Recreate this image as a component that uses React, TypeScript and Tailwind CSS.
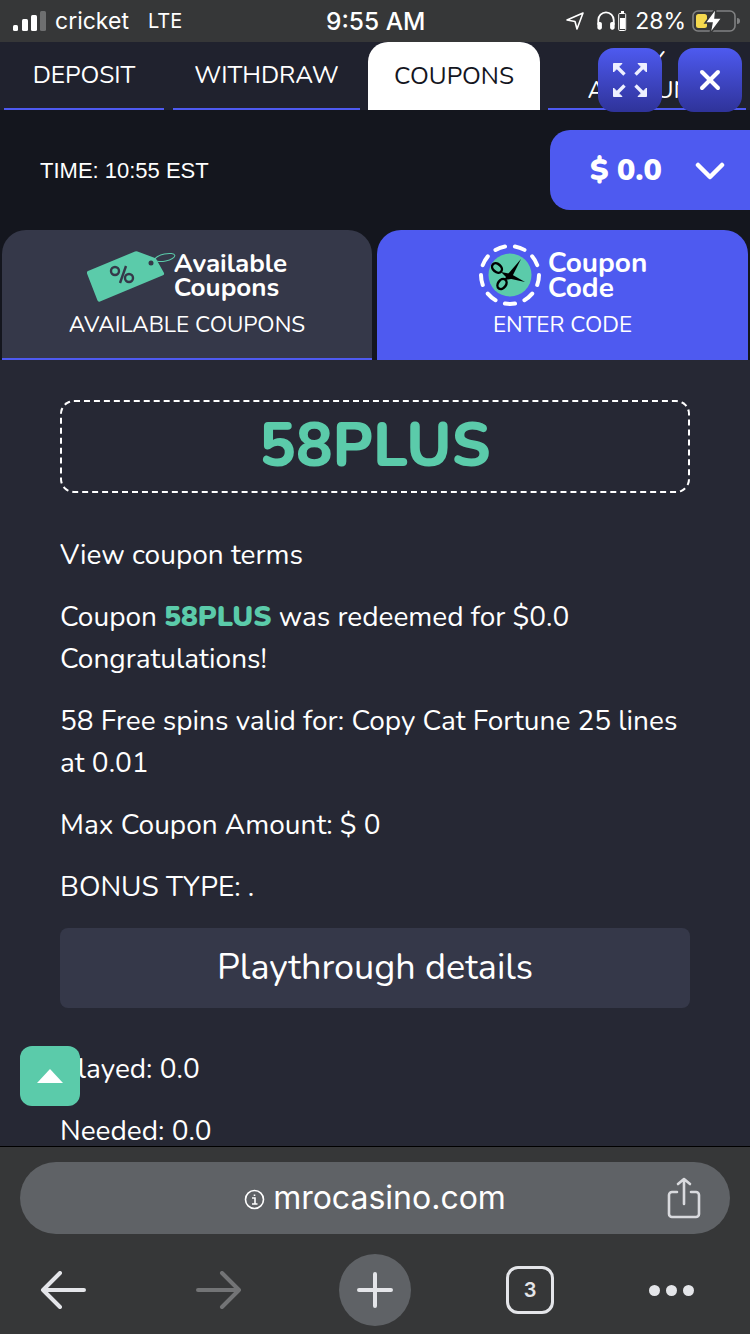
import React from 'react';
import { X } from 'lucide-react';

const FONT = "font-['Nunito','Lato',sans-serif]";

const SignalBars = () => (
  <svg width="33" height="20" viewBox="0 0 33 20" className="mr-[9px]">
    <rect x="0" y="14" width="5" height="6" rx="1.5" fill="#fff" />
    <rect x="9" y="8" width="6" height="12" rx="1.5" fill="#fff" />
    <rect x="18" y="4" width="6" height="16" rx="1.5" fill="#fff" />
    <rect x="27" y="0" width="6" height="20" rx="1.5" fill="#6e6f70" />
  </svg>
);

const StatusBar = () => (
  <div className="relative flex h-[42px] shrink-0 items-center justify-between bg-[#363738] pl-[13px] pr-[10px] font-['Inter',sans-serif] text-white">
    <div className="flex items-center text-[23px] leading-none">
      <SignalBars />
      <span>cricket</span>
      <span className="ml-[19px] text-[20px]">LTE</span>
    </div>
    <span className="absolute left-[326px] top-[8px] text-[24.5px] font-medium leading-[26px]">9:55 AM</span>
    <div className="flex items-center">
      <svg width="20" height="20" viewBox="0 0 20 20" fill="none" stroke="#fff" strokeWidth="1.6" strokeLinejoin="round">
        <path d="M18 2 L2 9 L10 10.5 L12 18 Z" />
      </svg>
      <svg width="20" height="22" viewBox="0 0 22 22" fill="none" className="ml-[11px]">
        <path d="M2.5 15 V10 a8.5 8.5 0 0 1 17 0 V15" stroke="#fff" strokeWidth="2" />
        <rect x="1.5" y="12" width="5" height="8.5" rx="2" fill="#fff" />
        <rect x="15.5" y="12" width="5" height="8.5" rx="2" fill="#fff" />
      </svg>
      <svg width="9" height="20" viewBox="0 0 9 20" className="ml-[2px]">
        <rect x="3" y="0" width="3" height="2" fill="#fff" />
        <rect x="0.7" y="2.5" width="7" height="17" rx="1" fill="none" stroke="#fff" strokeWidth="1" />
        <rect x="2" y="7" width="5" height="11" fill="#fff" />
      </svg>
      <span className="ml-[8px] text-[23px] leading-none">28%</span>
      <svg width="48" height="26" viewBox="0 0 48 26" className="ml-[6px]">
        <rect x="1" y="3" width="42" height="20" rx="5" fill="none" stroke="#808182" strokeWidth="1.6" />
        <path d="M45 10 a3 3 0 0 1 0 6 Z" fill="#808182" />
        <rect x="4" y="6" width="11" height="14" rx="2.5" fill="#f5d94e" />
        <path d="M24 0 L13 15 H20 L18 26 L30 10 H23 Z" fill="#fff" stroke="#363738" strokeWidth="1.5" />
      </svg>
    </div>
  </div>
);

const NavTab = ({ label, className }: { label: React.ReactNode; className: string }) => (
  <div className={`flex h-[68px] items-center justify-center border-b-2 border-[#4e5af0] text-center text-[24.5px] leading-[30px] text-white ${className}`}>
    {label}
  </div>
);

const NavTabs = () => (
  <div className={`flex h-[68px] shrink-0 bg-[#20222e] pl-[4px] ${FONT}`}>
    <NavTab label="DEPOSIT" className="w-[160px]" />
    <NavTab label="WITHDRAW" className="ml-[9px] w-[187px]" />
    <div className="ml-[8px] flex h-[68px] w-[172px] items-center justify-center rounded-t-[20px] bg-white text-[24.5px] text-[#14161e]">
      COUPONS
    </div>
    <NavTab label={<>MY<br />ACCOUNT</>} className="ml-[8px] w-[198px]" />
  </div>
);

const ExpandIcon = () => (
  <svg width="34" height="34" viewBox="0 0 34 34" fill="#eef0ff" stroke="#eef0ff" strokeLinejoin="round">
    <g strokeWidth="1">
      <path d="M0.5 0.5 H9 L0.5 9 Z" />
      <path d="M33.5 0.5 H25 L33.5 9 Z" />
      <path d="M0.5 33.5 H9 L0.5 25 Z" />
      <path d="M33.5 33.5 H25 L33.5 25 Z" />
    </g>
    <g strokeWidth="3.4">
      <path d="M3 3 L11.5 11.5" />
      <path d="M31 3 L22.5 11.5" />
      <path d="M3 31 L11.5 22.5" />
      <path d="M31 31 L22.5 22.5" />
    </g>
  </svg>
);

const TagLogo = () => (
  <svg width="90" height="52" viewBox="0 0 90 52" className="mt-[1px] shrink-0">
    <path d="M1 20 L48 0.5 a3 3 0 0 1 2.5 0 L68 7 a2 2 0 0 1 1.3 1.2 L77 22 a2 2 0 0 1 -1 2.3 L13 50.5 a2 2 0 0 1 -2.6 -1.2 L0 22.5 a2 2 0 0 1 1 -2.5 Z" fill="#5bcbaa" />
    <circle cx="64" cy="12" r="2.5" fill="#353849" />
    <ellipse cx="78" cy="6.5" rx="10" ry="3.5" transform="rotate(-12 78 6.5)" fill="none" stroke="#5bcbaa" strokeWidth="1" />
    <g stroke="#353849" strokeWidth="2.4" fill="none">
      <circle cx="28" cy="20" r="4" />
      <circle cx="42" cy="27" r="4" />
      <path d="M39 15 L33 32" />
    </g>
  </svg>
);

const ScissorsLogo = () => (
  <svg width="64" height="64" viewBox="0 0 64 64" className="shrink-0">
    <circle cx="32" cy="32" r="29" fill="none" stroke="#fff" strokeWidth="4" strokeDasharray="10.2 10" strokeLinecap="round" />
    <circle cx="32" cy="32" r="21.5" fill="#5bcbaa" />
    <ellipse cx="19" cy="25" rx="5.5" ry="4" fill="none" stroke="#000" strokeWidth="2.5" transform="rotate(40 19 25)" />
    <ellipse cx="24" cy="41" rx="4" ry="5.5" fill="none" stroke="#000" strokeWidth="2.5" transform="rotate(35 24 41)" />
    <path d="M43 16 L33 36 L26 37 L30 31 Z" fill="#000" />
    <path d="M47 39 L29 35 L23 29 L33 31 Z" fill="#000" />
  </svg>
);

const CouponTabs = () => (
  <div className={`flex h-[130px] shrink-0 justify-between bg-[#14161e] px-[2px] text-white ${FONT}`}>
    <div className="flex w-[370px] flex-col items-center rounded-t-[24px] border-b-2 border-[#4e5af0] bg-[#353849] pt-[20px]">
      <div className="flex h-[52px] items-center">
        <TagLogo />
        <div className="-ml-[3px] text-[26px] font-bold leading-[24px]">Available<br />Coupons</div>
      </div>
      <div className="mt-[8px] text-[22.5px] leading-[30px]">AVAILABLE COUPONS</div>
    </div>
    <div className="flex w-[371px] flex-col items-center rounded-t-[24px] bg-[#4e5af0] pt-[13px]">
      <div className="flex h-[64px] items-center">
        <ScissorsLogo />
        <div className="ml-[6px] mt-[2px] text-[28px] font-bold leading-[25px]">Coupon<br />Code</div>
      </div>
      <div className="mt-[3px] text-[22.5px] leading-[30px]">ENTER CODE</div>
    </div>
  </div>
);

const Content = () => (
  <div className={`min-h-0 flex-1 overflow-hidden bg-[#262834] px-[60px] pt-[40px] text-[28px] leading-[42px] text-white ${FONT}`}>
    <div className="flex h-[93px] items-center justify-center rounded-[14px] border-2 border-dashed border-white pb-[2px] text-[61px] font-extrabold text-[#5bcbaa]">
      58PLUS
    </div>
    <p className="mt-[41px]">View coupon terms</p>
    <p className="mt-[20px]">
      Coupon <span className="font-black text-[#5bcbaa]">58PLUS</span> was redeemed for $0.0<br />Congratulations!
    </p>
    <p className="mt-[20px]">58 Free spins valid for: Copy Cat Fortune 25 lines<br />at 0.01</p>
    <p className="mt-[20px]">Max Coupon Amount: $ 0</p>
    <p className="mt-[20px]">BONUS TYPE: .</p>
    <div className="mt-[20px] flex h-[80px] items-center justify-center rounded-[8px] bg-[#353849] text-[36px]">
      Playthrough details
    </div>
    <p className="mt-[40px]">Played: 0.0</p>
    <p className="mt-[20px]">Needed: 0.0</p>
  </div>
);

const BrowserBar = () => (
  <div className="flex h-[188px] shrink-0 flex-col border-t border-black bg-[#363738] px-[20px] pt-[15px]">
    <div className="relative flex h-[72px] items-center justify-center rounded-[36px] bg-[#5f6266] font-['Inter',sans-serif] text-[32px] text-white">
      <svg width="21" height="21" viewBox="0 0 21 21" fill="none" stroke="#fff" className="mr-[8px] mt-[2px]">
        <circle cx="10.5" cy="10.5" r="9" strokeWidth="1.6" />
        <path d="M8 9 H11 V15 M8 15 H13.5 M10.5 5.5 V7" strokeWidth="1.6" />
      </svg>
      <span>mrocasino.com</span>
      <svg width="34" height="42" viewBox="0 0 34 42" fill="none" stroke="#d9dade" strokeWidth="2.6" strokeLinecap="round" strokeLinejoin="round" className="absolute right-[29px] top-[15px]">
        <path d="M10 15 H5 a3 3 0 0 0 -3 3 V37 a3 3 0 0 0 3 3 H29 a3 3 0 0 0 3 -3 V18 a3 3 0 0 0 -3 -3 H24" />
        <path d="M17 27 V2 M11 7 L17 2 L23 7" />
      </svg>
    </div>
    <div className="mt-[20px] flex items-center pl-[20px]">
      <svg width="46" height="38" viewBox="0 0 46 38" fill="none" stroke="#e4e5e9" strokeWidth="4" strokeLinecap="round" strokeLinejoin="round">
        <path d="M44 19 H3 M20 2 L3 19 L20 36" />
      </svg>
      <svg width="46" height="38" viewBox="0 0 46 38" fill="none" stroke="#737476" strokeWidth="4" strokeLinecap="round" strokeLinejoin="round" className="ml-[110px]">
        <path d="M2 19 H43 M26 2 L43 19 L26 36" />
      </svg>
      <div className="ml-[97px] flex h-[72px] w-[72px] items-center justify-center rounded-full bg-[#5f6266]">
        <svg width="36" height="36" viewBox="0 0 36 36" fill="none" stroke="#e4e5e9" strokeWidth="4" strokeLinecap="round">
          <path d="M18 2 V34 M2 18 H34" />
        </svg>
      </div>
      <div className="ml-[95px] flex h-[48px] w-[48px] items-center justify-center rounded-[12px] border-[3px] border-[#e4e5e9] font-['Inter',sans-serif] text-[20px] font-semibold text-[#e4e5e9]">
        3
      </div>
      <div className="ml-[95px] flex gap-[6px]">
        <span className="h-[11px] w-[11px] rounded-full bg-[#e4e5e9]" />
        <span className="h-[11px] w-[11px] rounded-full bg-[#e4e5e9]" />
        <span className="h-[11px] w-[11px] rounded-full bg-[#e4e5e9]" />
      </div>
    </div>
  </div>
);

export default function App() {
  return (
    <div className="relative flex h-[1334px] w-[750px] flex-col overflow-hidden">
      <StatusBar />
      <NavTabs />

      {/* saldo */}
      <div className="flex h-[120px] shrink-0 items-center justify-between bg-[#14161e] pl-[40px]">
        <span className="font-['Liberation_Sans',sans-serif] text-[22px] text-white">TIME: 10:55 EST</span>
        <div className={`flex h-[80px] w-[200px] items-center rounded-l-[20px] bg-[#4e5af0] pl-[40px] text-[30.5px] font-black text-white ${FONT}`}>
          <span className="mt-[2px]">$ 0.0</span>
          <svg width="30" height="18" viewBox="0 0 30 18" fill="none" stroke="#fff" strokeWidth="4.5" strokeLinecap="round" strokeLinejoin="round" className="ml-[33px] mt-[1px]">
            <path d="M3 3 L15 15 L27 3" />
          </svg>
        </div>
      </div>

      <CouponTabs />
      <Content />
      <BrowserBar />

      {/* botones flotantes */}
      <div className="absolute left-[598px] top-[48px] flex h-[64px] w-[64px] items-center justify-center rounded-[16px] bg-gradient-to-b from-[#4e5af0] to-[#2f339a]">
        <ExpandIcon />
      </div>
      <div className="absolute left-[678px] top-[48px] flex h-[64px] w-[64px] items-center justify-center rounded-[16px] bg-gradient-to-b from-[#4e5af0] to-[#2f339a]">
        <X size={32} strokeWidth={3} className="text-white" />
      </div>
      <div className="absolute left-[20px] top-[1046px] flex h-[60px] w-[60px] items-center justify-center rounded-[12px] bg-[#5bcbaa]">
        <svg width="26" height="14" viewBox="0 0 26 14"><path d="M13 0 L26 14 H0 Z" fill="#fff" /></svg>
      </div>
    </div>
  );
}
